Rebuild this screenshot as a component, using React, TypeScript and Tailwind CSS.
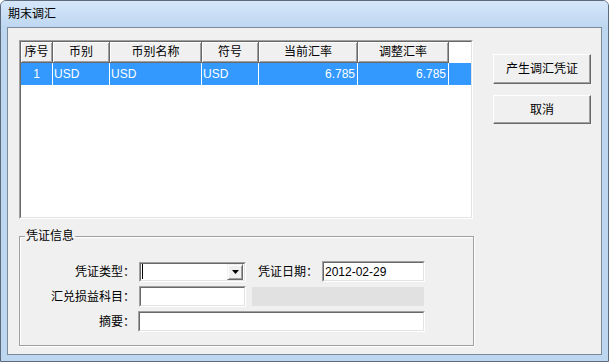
import React from 'react';

const columns = [
    { label: '序号', w: 'w-[32px]', value: '1', align: 'justify-center' },
    { label: '币别', w: 'w-[57px]', value: 'USD', align: 'justify-start pl-[1px]' },
    { label: '币别名称', w: 'w-[92px]', value: 'USD', align: 'justify-start pl-[1px]' },
    { label: '符号', w: 'w-[57px]', value: 'USD', align: 'justify-start pl-[1px]' },
    { label: '当前汇率', w: 'w-[99px]', value: '6.785', align: 'justify-end pr-[2px]' },
    { label: '调整汇率', w: 'w-[91px]', value: '6.785', align: 'justify-end pr-[2px]' },
];

function Sunken({ className = '', children }: { className?: string; children?: React.ReactNode }) {
    return (
        <div className={`border border-t-[#a0a0a0] border-l-[#a0a0a0] border-b-white border-r-white ${className}`}>
            <div className="h-full w-full border border-t-[#696969] border-l-[#696969] border-b-[#e3e3e3] border-r-[#e3e3e3] bg-white flex items-center">
                {children}
            </div>
        </div>
    );
}

function Button({ label, className = '' }: { label: string; className?: string }) {
    return (
        <button className={`w-[98px] border border-t-white border-l-white border-b-[#696969] border-r-[#696969] bg-[#f0f0f0] shadow-[inset_-1px_-1px_0_#a0a0a0] text-[12px] leading-none text-black flex items-center justify-center ${className}`}>
            {label}
        </button>
    );
}

export default function App() {
    return (
        <div className="w-[609px] h-[362px] flex flex-col bg-[#bed7f1] border border-[#5b6b7d] rounded-t-[6px] overflow-hidden font-['Liberation_Sans','Noto_Sans_CJK_SC',sans-serif] text-[12px] text-black">
            {/* Title bar */}
            <div className="h-[26px] flex items-center pl-[7px] bg-gradient-to-b from-[#d6e7fa] to-[#bed7f1]">
                <span className="text-[12px] leading-none">期末调汇</span>
            </div>

            {/* Client area */}
            <div className="flex-1 mx-[6px] mb-[6px] border border-[#7d8a99] bg-[#f0f0f0] flex">
                <div className="w-[466px] pl-[11px] pt-[12px] flex flex-col">
                    {/* List view */}
                    <Sunken className="w-[454px] h-[179px]">
                        <div className="self-stretch flex-1 flex flex-col">
                            <div className="flex h-[21px]">
                                {columns.map((c) => (
                                    <div
                                        key={c.label}
                                        className={`${c.w} flex items-center justify-center bg-[#f0f0f0] border-r border-b border-[#696969] shadow-[inset_1px_1px_0_#fff,inset_-1px_-1px_0_#a0a0a0] leading-none`}
                                    >
                                        {c.label}
                                    </div>
                                ))}
                                <div className="flex-1 bg-white" />
                            </div>
                            <div className="flex h-[23px] bg-[#3399ff] text-white border-b border-white">
                                {columns.map((c) => (
                                    <div key={c.label} className={`${c.w} flex items-center ${c.align} border-r border-white leading-none`}>
                                        {c.value}
                                    </div>
                                ))}
                                <div className="flex-1" />
                            </div>
                            <div className="flex-1" />
                        </div>
                    </Sunken>

                    {/* Voucher info group */}
                    <fieldset className="mt-[11px] h-[116px] w-[455px] border border-[#a0a0a0] shadow-[inset_1px_1px_0_#fff,1px_1px_0_#fff]">
                        <legend className="ml-[5px] px-[1px] leading-[12px]">凭证信息</legend>
                        <div className="pt-[19px] flex flex-col gap-[4px]">
                            <div className="flex items-center h-[21px]">
                                <span className="w-[115px] text-right leading-none">凭证类型：</span>
                                <Sunken className="ml-[4px] w-[107px] h-[20px]">
                                    <div className="ml-[1px] w-[1px] h-[15px] bg-black" />
                                    <div className="ml-auto mr-[1px] w-[16px] h-[16px] border border-t-[#f0f0f0] border-l-[#f0f0f0] border-b-[#696969] border-r-[#696969] bg-[#f0f0f0] shadow-[inset_1px_1px_0_#fff,inset_-1px_-1px_0_#a0a0a0] flex items-center justify-center">
                                        <svg width="7" height="4" viewBox="0 0 7 4">
                                            <polygon points="0,0 7,0 3.5,4" fill="#000" />
                                        </svg>
                                    </div>
                                </Sunken>
                                <span className="ml-[12px] w-[60px] leading-none">凭证日期：</span>
                                <Sunken className="ml-[4px] w-[103px] h-[21px]">
                                    <span className="pl-[1px] leading-none">2012-02-29</span>
                                </Sunken>
                            </div>
                            <div className="flex items-center h-[21px]">
                                <span className="w-[115px] text-right leading-none">汇兑损益科目：</span>
                                <Sunken className="ml-[4px] w-[107px] h-[21px]" />
                                <div className="ml-[6px] w-[172px] h-[19px] bg-[#e1e1e1]" />
                            </div>
                            <div className="flex items-center h-[21px]">
                                <span className="w-[115px] text-right leading-none">摘要：</span>
                                <Sunken className="ml-[3px] w-[287px] h-[21px]" />
                            </div>
                        </div>
                    </fieldset>
                </div>

                {/* Buttons */}
                <div className="ml-[19px] pt-[26px] flex flex-col gap-[11px]">
                    <Button label="产生调汇凭证" className="h-[30px]" />
                    <Button label="取消" className="h-[29px]" />
                </div>
            </div>
        </div>
    );
}
